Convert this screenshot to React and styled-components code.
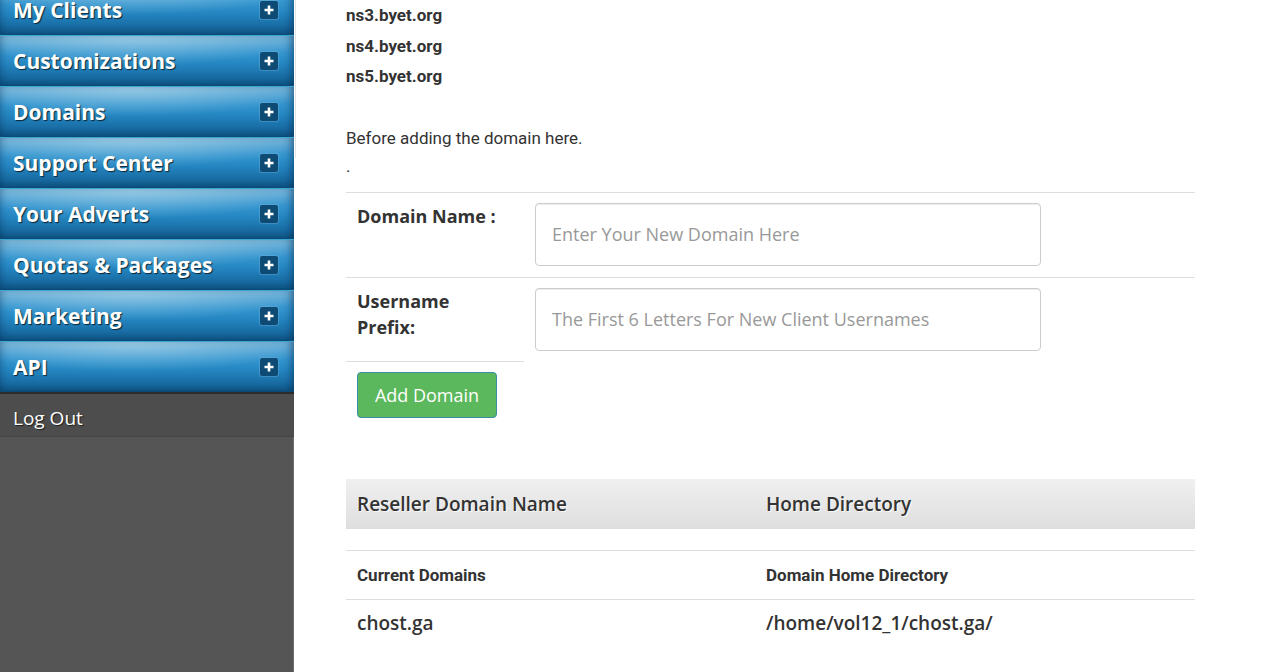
import React from 'react'
import styled, { createGlobalStyle } from 'styled-components'

const GlobalStyle = createGlobalStyle`
  html, body {
    margin: 0;
    padding: 0;
    background: #fff;
    overflow: hidden;
  }
  body {
    font-family: Roboto, "Open Sans", sans-serif;
    color: #333;
  }
`;

// page is shown scrolled a little, so the whole layout sits 16px up
const Page = styled.div`
   display: flex;
   margin-top: -16px;
   min-height: calc(100vh + 16px);
`;

const Sidebar = styled.nav`
   width: 294px;
   flex-shrink: 0;
   background: #555;
   box-shadow: inset -1px 0 0 #6b6b6b;
   display: flex;
   flex-direction: column;
`;

const MenuItem = styled.div`
   height: 49px;
   display: flex;
   align-items: center;
   justify-content: space-between;
   padding: 0 16px 0 13px;
   border-top: 1px solid #3aa6d4;
   border-bottom: 1px solid #0b4a72;
   background:
     radial-gradient(ellipse 60% 60% at 45% 0%, rgba(190,225,240,0.55), rgba(190,225,240,0) 100%),
     linear-gradient(to bottom, #6fb1d8 0%, #3596cf 35%, #2688c3 55%, #1a70a8 80%, #0f5686 100%);
   box-shadow: inset 6px 0 10px -6px rgba(0,40,80,0.5), inset -8px 0 10px -6px rgba(0,40,80,0.6);
   color: #fff;
   font-family: "Open Sans", sans-serif;
   font-weight: 700;
   font-size: 21px;
   text-shadow: 1px 1px 1px rgba(0,0,0,0.7);
   cursor: pointer;
`;

const PlusBox = styled.span`
   width: 18px;
   height: 18px;
   border-radius: 2px;
   background: #0d4a74;
   box-shadow: 0 0 0 1px rgba(120,180,220,0.35);
   display: flex;
   align-items: center;
   justify-content: center;
`;

const LogOut = styled.div`
   height: 36px;
   display: flex;
   align-items: center;
   padding: 6px 13px 0;
   background: #4d4d4d;
   border-top: 2px solid #2c2c2c;
   border-bottom: 1px solid #454545;
   color: #fff;
   font-family: "Open Sans", sans-serif;
   font-size: 19px;
   text-shadow: 1px 1px 1px rgba(0,0,0,0.6);
`;

const Main = styled.main`
   flex: 1;
   position: relative;
   padding: 16px 85px 0 52px;

   &::before {
      content: '';
      position: absolute;
      left: 1px;
      top: 0;
      width: 1px;
      height: 174px;
      background: #e4e4e4;
   }
`;

const NsLine = styled.div`
   font-family: Roboto, sans-serif;
   font-weight: 700;
   font-size: 17px;
   line-height: 30.5px;
   color: #333;
`;

const Note = styled.p`
   margin: 32px 0 12px;
   font-family: Roboto, sans-serif;
   font-size: 17px;
   line-height: 28px;
   color: #333;
`;

const Table = styled.table`
   width: 849px;
   border-collapse: collapse;
   border-spacing: 0;
   margin-top: ${p => p.$mt || 0}px;
`;

const Row = styled.tr`
   border-top: ${p => (p.$line ? '1px solid #dedede' : 'none')};
`;

const Label = styled.td`
   width: 156px;
   padding: 10px 11px;
   vertical-align: top;
   font-family: "Open Sans", sans-serif;
   font-weight: 700;
   font-size: 18px;
   line-height: 26px;
   color: #333;
   border-bottom: ${p => (p.$underline ? '1px solid #dedede' : 'none')};
`;

const Field = styled.td`
   padding: 10px 11px 11px;
   vertical-align: top;
`;

const Input = styled.input`
   box-sizing: border-box;
   display: block;
   width: 506px;
   height: 63px;
   padding: 0 16px;
   border: 1px solid #ccc;
   border-radius: 4px;
   box-shadow: inset 0 1px 1px rgba(0,0,0,0.075);
   font-family: "Open Sans", sans-serif;
   font-size: 18px;
   color: #555;
   outline: none;

   &::placeholder {
      color: #999;
   }
`;

const Button = styled.button`
   box-sizing: border-box;
   width: 140px;
   height: 46px;
   background: #5cb85c;
   border: 1px solid #3a8da4;
   border-radius: 4px;
   color: #fff;
   font-family: "Open Sans", sans-serif;
   font-size: 18px;
   cursor: pointer;
`;

const HeadCell = styled.th`
   height: 50px;
   padding: 0 11px;
   text-align: left;
   width: ${p => p.$w || 'auto'};
   background: linear-gradient(to bottom, #f0f0f0 0%, #dedede 100%);
   font-family: "Open Sans", sans-serif;
   font-weight: 600;
   font-size: 19px;
   color: #333;
   text-shadow: 1px 1px 0 rgba(255,255,255,0.8);
`;

const Spacer = styled.td`
   height: 21px;
   padding: 0;
`;

const SubCell = styled.td`
   height: 48px;
   padding: 0 11px;
   font-family: Roboto, sans-serif;
   font-weight: 700;
   font-size: 17px;
   color: #333;
`;

const DataCell = styled.td`
   height: 46px;
   padding: 0 11px;
   font-family: "Open Sans", sans-serif;
   font-weight: 600;
   font-size: 19px;
   color: #333;
`;

const menu = [
   'My Clients',
   'Customizations',
   'Domains',
   'Support Center',
   'Your Adverts',
   'Quotas & Packages',
   'Marketing',
   'API',
];

const Plus = () => (
   <PlusBox>
      <svg width="12" height="12" viewBox="0 0 12 12">
         <path d="M6 1.5v9M1.5 6h9" stroke="#fff" strokeWidth="2.6" />
      </svg>
   </PlusBox>
);

const App = () => {
   return (
      <>
         <GlobalStyle />
         <Page>
            <Sidebar>
               {menu.map(m => (
                  <MenuItem key={m}>
                     {m}
                     <Plus />
                  </MenuItem>
               ))}
               <LogOut>Log Out</LogOut>
            </Sidebar>
            <Main>
               <NsLine>ns3.byet.org</NsLine>
               <NsLine>ns4.byet.org</NsLine>
               <NsLine>ns5.byet.org</NsLine>
               <Note>
                  Before adding the domain here.
                  <br />
                  .
               </Note>
               <Table>
                  <tbody>
                     <Row $line>
                        <Label>Domain Name :</Label>
                        <Field>
                           <Input placeholder="Enter Your New Domain Here" />
                        </Field>
                     </Row>
                     <Row $line>
                        <Label $underline>Username<br />Prefix:</Label>
                        <Field>
                           <Input placeholder="The First 6 Letters For New Client Usernames" />
                        </Field>
                     </Row>
                     <Row>
                        <Field colSpan={2}>
                           <Button>Add Domain</Button>
                        </Field>
                     </Row>
                  </tbody>
               </Table>
               <Table $mt={50}>
                  <thead>
                     <tr>
                        <HeadCell $w="387px">Reseller Domain Name</HeadCell>
                        <HeadCell>Home Directory</HeadCell>
                     </tr>
                  </thead>
                  <tbody>
                     <tr><Spacer colSpan={2} /></tr>
                     <Row $line>
                        <SubCell>Current Domains</SubCell>
                        <SubCell>Domain Home Directory</SubCell>
                     </Row>
                     <Row $line>
                        <DataCell>chost.ga</DataCell>
                        <DataCell>/home/vol12_1/chost.ga/</DataCell>
                     </Row>
                  </tbody>
               </Table>
            </Main>
         </Page>
      </>
   )
}

export default App
